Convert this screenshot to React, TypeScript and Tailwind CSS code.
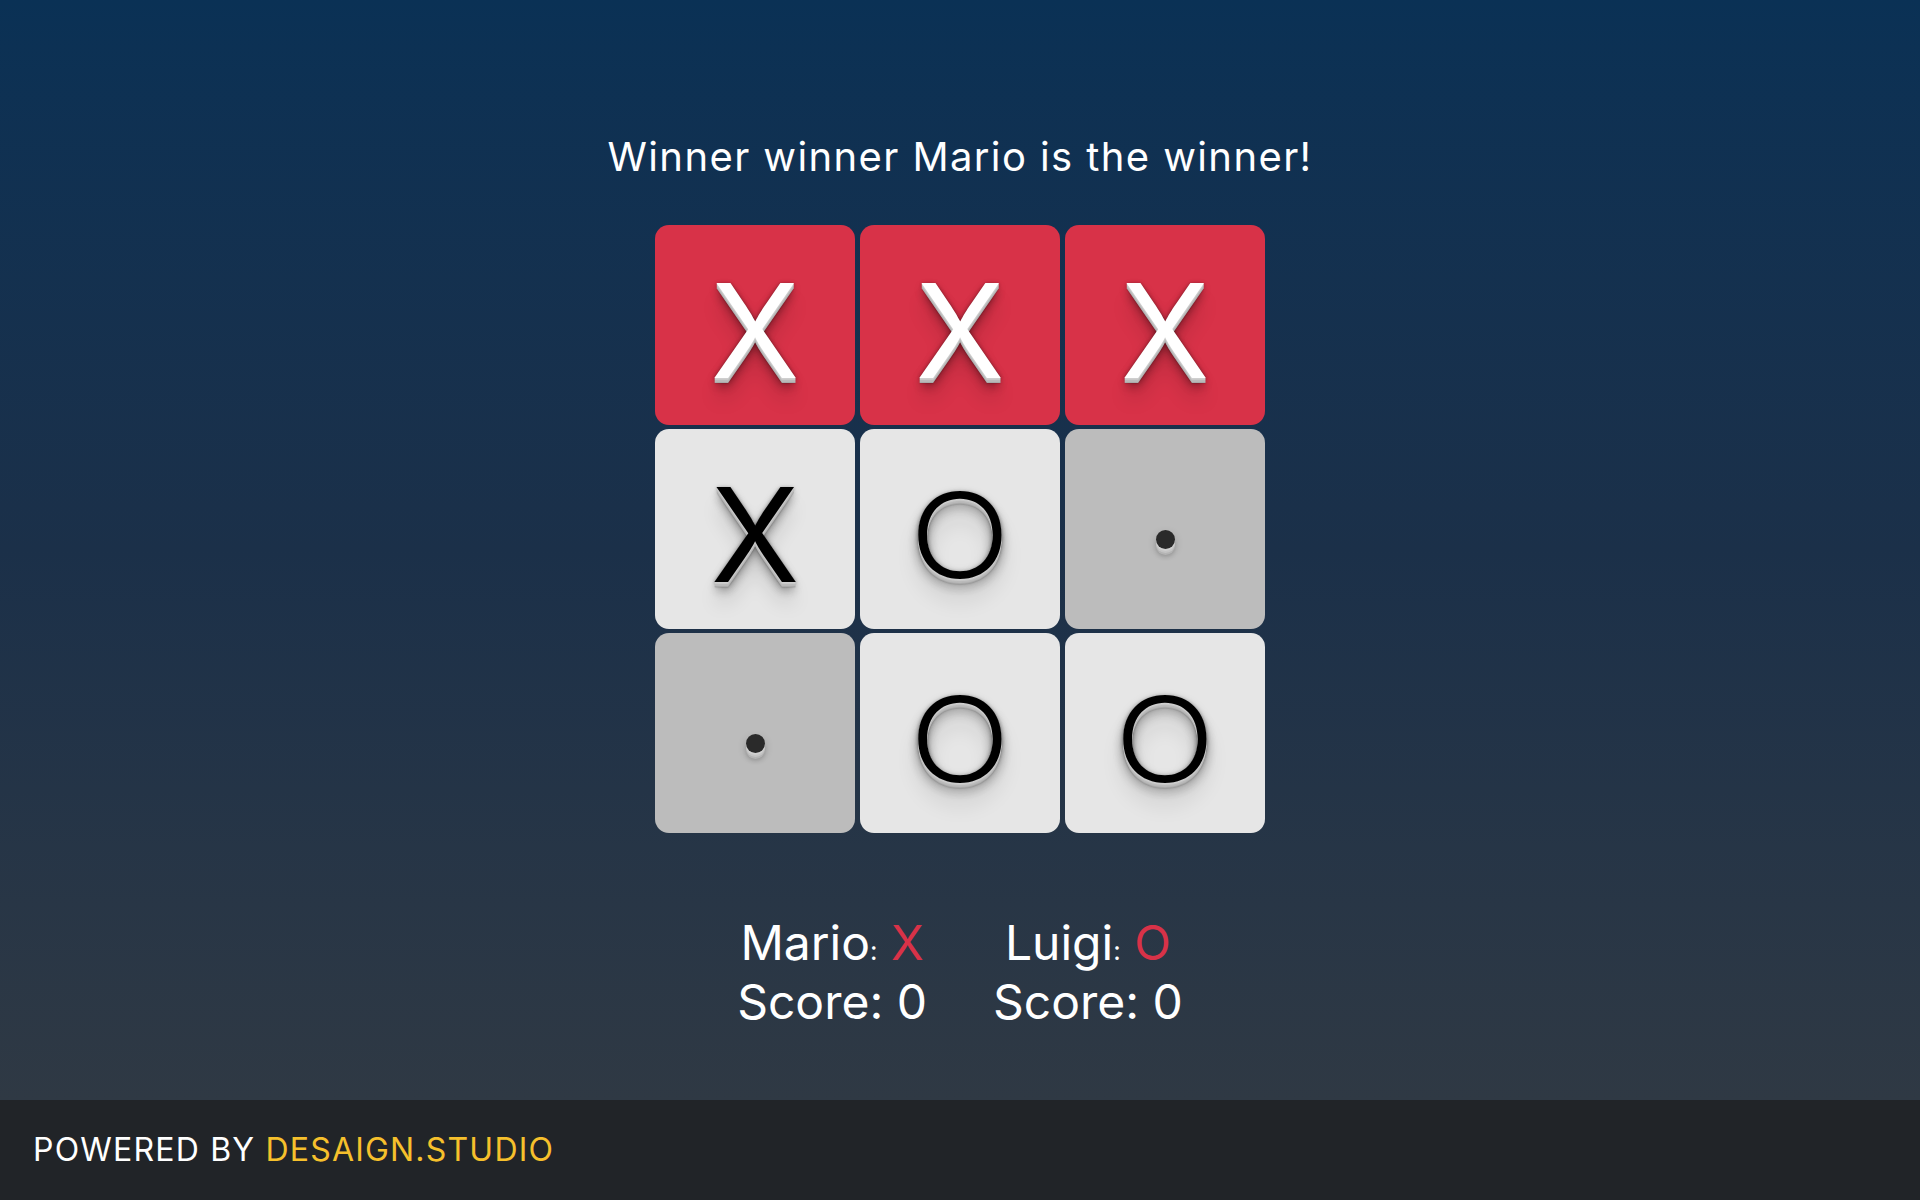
import React from "react";

type Mark = "X" | "O" | "";

const BOARD: Mark[] = ["X", "X", "X", "X", "O", "", "", "O", "O"];
const WIN = [0, 1, 2];

const SHADOW_3D =
  "[text-shadow:0_1px_0_#cfcfcf,0_2px_0_#c9c9c9,0_3px_0_#bbb,0_4px_0_#b9b9b9,0_5px_0_#aaa,0_6px_1px_rgba(0,0,0,.1),0_0_5px_rgba(0,0,0,.1),0_1px_3px_rgba(0,0,0,.3),0_3px_5px_rgba(0,0,0,.2),0_5px_10px_rgba(0,0,0,.25),0_10px_10px_rgba(0,0,0,.2),0_20px_20px_rgba(0,0,0,.15)]";

function Cell({ mark, win }: { mark: Mark; win: boolean }) {
  const bg = win ? "bg-[#d83248]" : mark ? "bg-[#e6e6e6]" : "bg-[#bcbcbc]";
  const color = win ? "text-white" : "text-black";
  return (
    <div className={`flex h-[200px] w-[200px] items-center justify-center rounded-[14px] ${bg}`}>
      {mark === "X" && (
        <span className={`pt-[11px] text-[130px] leading-none font-normal ${color} ${SHADOW_3D}`}>X</span>
      )}
      {mark === "O" && (
        <span className={`inline-block scale-x-[1.12] pt-[12px] text-[118px] leading-none font-light ${color} ${SHADOW_3D}`}>
          O
        </span>
      )}
      {!mark && (
        <span className="mt-[21px] h-[19px] w-[19px] rounded-full bg-[#2a2a2a] shadow-[0_2px_0_#d0d0d0,0_4px_0_#c4c4c4,0_6px_0_#b4b4b4,0_8px_4px_rgba(0,0,0,.15),0_4px_10px_rgba(0,0,0,.2)]" />
      )}
    </div>
  );
}

function Player({ name, mark }: { name: string; mark: Mark }) {
  return (
    <div className="flex flex-col items-center text-[48px] leading-[59px] text-white">
      <div>
        {name}
        <span className="text-[26px] leading-none">:</span> <span className="text-[#d83248]">{mark}</span>
      </div>
      <div>Score: 0</div>
    </div>
  );
}

export default function App() {
  return (
    <div className="flex min-h-[1200px] flex-col font-['Inter',sans-serif]">
      <main className="flex h-[1100px] flex-col items-center bg-gradient-to-b from-[#0a3155] via-[#1b3049] to-[#2f3944]">
        <h1 className="mt-[133px] text-[40px] leading-[48px] font-normal tracking-[1.4px] text-white">
          Winner winner Mario is the winner!
        </h1>

        <div className="mt-[44px] grid grid-cols-[200px_200px_200px] gap-x-[5px] gap-y-[4px]">
          {BOARD.map((m, i) => (
            <Cell key={i} mark={m} win={WIN.includes(i)} />
          ))}
        </div>

        <div className="mt-[80px] flex gap-[66px]">
          <Player name="Mario" mark="X" />
          <Player name="Luigi" mark="O" />
        </div>
      </main>

      <footer className="flex h-[100px] items-center bg-[#212428] pl-[33px] text-[32px] tracking-[1.2px] text-white">
        POWERED BY&nbsp;<span className="text-[#f6c02c]">DESAIGN.STUDIO</span>
      </footer>
    </div>
  );
}
